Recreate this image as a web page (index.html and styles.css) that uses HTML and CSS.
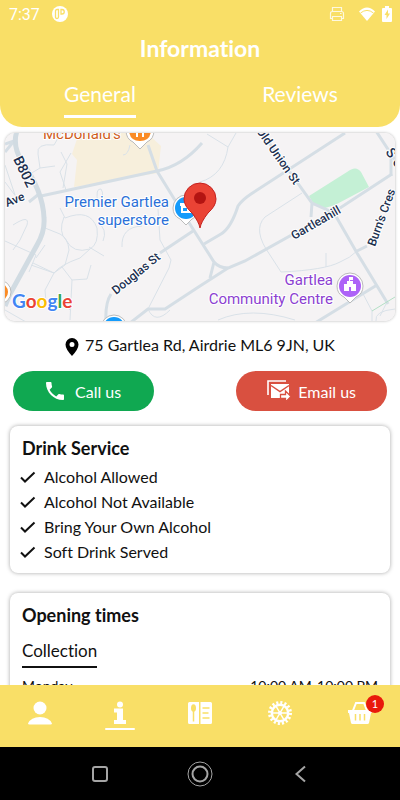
FILE: index.html
```html
<!DOCTYPE html>
<html lang="en">
<head>
    <meta charset="UTF-8">
    <meta name="viewport" content="width=device-width, initial-scale=1.0">
    <title>Information</title>
    <link rel="stylesheet" href="styles.css">
</head>
<body>

    <header class="top">
        <!-- Status bar -->
        <div class="status">
            <span>7:37</span>
            <svg width="16" height="16" viewBox="0 0 16 16">
                <circle cx="8" cy="8" r="8" fill="#fff"/>
                <path d="M3.500 5q0-1.500 1.500-1.500h1.500v7.500q0 1.500-1.500 1.500t-1.500-1.500zM9 3.500h1a2 2 0 0 1 0 4.500h-1z" fill="none" stroke="#f9df67" stroke-width="1.300"/>
            </svg>
            <svg class="printer" width="16" height="16" viewBox="0 0 16 16" fill="none" stroke="#fff" stroke-width="1.200">
                <path d="M3.500 5.500v-4h9v4M3.500 12.500h-2v-5q0-2 2-2h9q2 0 2 2v5h-2M3.500 10.500h9v4h-9zM11 7.500h1.500"/>
            </svg>
            <svg class="wifi" width="18" height="14" viewBox="0 0 18 14">
                <path d="M1 4.500Q9-3.500 17 4.500L9 14z" fill="#fff"/>
                <path d="M2.500 6Q9 .800 15.500 6" fill="none" stroke="#f9df67" stroke-width="1"/>
            </svg>
            <svg width="10" height="16" viewBox="0 0 10 16">
                <path d="M3 0h4v2h2q1 0 1 1v12q0 1-1 1h-8q-1 0-1-1v-12q0-1 1-1h2z" fill="#fff"/>
                <path d="M6 3.500L2.500 9h2v4L8 7.500H6z" fill="#f9df67"/>
            </svg>
        </div>
        <h1>Information</h1>
        <nav class="tabs">
            <a href="#general" class="active">General</a>
            <a href="#reviews">Reviews</a>
        </nav>
    </header>

    <main id="general">
        <!-- Map -->
        <svg class="map" viewBox="5 133 390 188" preserveAspectRatio="xMidYMid slice" role="img" aria-label="Map of Gartlea">
            <rect x="5" y="133" width="390" height="188" fill="#f5f3f4"/>
            <path d="M79 133H147L161 146L158 173L74 187L77 160L72 154z" fill="#f7efdc"/>
            <path d="M309 196L347 172Q356 165 361 172L369 187L335 205L325 208L313 203z" fill="#c4f0d5"/>

            <g class="lane">
                <path d="M61 133L54 145Q36 143 38 154L40 168L55 166M40 168L30 174M61 152L67 164L63 188M71 153L60 172L66 190"/>
                <path d="M5 165L15 195M5 182L20 202M13 225Q30 214 27 225L20 240L13 250M5 241L36 255L29 272"/>
                <path d="M45 228L60 234Q68 238 69 250L65 265L54 273L33 263M45 245L36 258M31 265L54 273M60 208L65 218Q90 208 97 228Q99 244 90 249Q73 254 66 240Q58 232 64 217"/>
                <path d="M89 247L104 256M90 249L80 258Q60 265 54 273L45 290L46 302M62 267L72 280L70 320M72 280L87 279L91 265M97 222Q108 229 103 241M46 302Q62 300 70 310"/>
                <path d="M98 203Q95 188 101 189Q105 195 99 202M158 209L160 240L171 260L169 268L148 309M122 247Q121 227 142 226M148 309Q155 325 170 310M130 145Q128 155 123 155"/>
                <path d="M207 134L228 147Q224 175 200 182M228 147L236 133M302 193L265 217Q252 230 270 255L281 272Q325 270 340 262Q350 258 357 251M326 253V267"/>
                <path d="M5 310L40 330M218 320Q250 306 295 320M361 290L372 311V321M387 302L380 316M395 309Q374 311 376 321"/>
            </g>
            <g class="road">
                <path d="M5 144L17 140M41 196L157 171Q182 166 202 143M29 202L39 194M148 145L157 171L173 197L193 229L214 262Q219 268 228 268M214 262L210 278"/>
                <path d="M160 253L193 231M111 294Q105 303 106 322M130 323L148 309H165L200 286L228 268L245 261L340 208L392 174"/>
                <path d="M204 244L221 234Q231 228 238 206Q242 200 251 194L345 133M262 133L312 203L334 213L357 253L388 304M312 203L311 217M357 251L367 246"/>
                <path d="M315 323L377 285M376 131L395 160M391 176V155M5 152L14 141"/>
            </g>
            <path class="highway" d="M17 131Q12 145 22 162Q43 191 44 218Q45 232 37 245L10 294L5 306"/>
            <path d="M372 311L395 297" stroke="#b3dfc5" fill="none"/>

            <!-- Place markers -->
            <g class="marker">
                <path d="M126 130Q126 139 133 142L140 149L147 142Q154 139 154 130z"/>
                <path d="M173 208A13 13 0 0 1 199 208Q199 216 192 219L186 225L180 219Q173 216 173 208z"/>
                <path d="M337 286A13 13 0 0 1 363 286Q363 294 356 297L350 303L344 297Q337 294 337 286z"/>
                <circle cx="114" cy="328" r="13"/>
                <circle cx="-1" cy="292" r="12"/>
            </g>
            <path d="M129 131H151Q150 141 140 141Q130 141 129 131z" fill="#fa8b25"/>
            <path d="M137 131v6M143 131v6" stroke="#fff" stroke-width="2"/>
            <circle cx="186" cy="208" r="11" fill="#159bfb"/>
            <path d="M180 203h12v3h-12zM181 206h10v7h-10z" fill="#fff"/>
            <path d="M183 208h4v3h-4z" fill="#159bfb"/>
            <circle cx="350" cy="286" r="11" fill="#ad63f7"/>
            <path d="M344 291v-7h3v-3h2v-4h4v3h-3v1h3v3h3v7h-5v-4h-2v4z" fill="#fff"/>
            <circle cx="114" cy="328" r="11" fill="#159bfb"/>
            <circle cx="-1" cy="292" r="9" fill="#fa8b25"/>

            <!-- Labels -->
            <g class="street">
                <text transform="translate(13 159) rotate(64)" font-size="14">B802</text>
                <text transform="translate(7 207) rotate(-22)">Ave</text>
                <text transform="translate(116 295) rotate(-39)">Douglas St</text>
                <text transform="translate(256 131) rotate(55)">Old Union St</text>
                <text transform="translate(294 240) rotate(-30)">Gartleahill</text>
                <text transform="translate(375 247) rotate(-70)">Burn's Cres</text>
                <text transform="translate(385 152) rotate(55)" font-size="14">S C</text>
            </g>
            <g class="place">
                <text x="43" y="139" fill="#cf5d1c">McDonald's</text>
                <g fill="#2a70d8" text-anchor="end">
                    <text x="169" y="207">Premier Gartlea</text>
                    <text x="169" y="225">superstore</text>
                </g>
                <g fill="#8c3fd1" text-anchor="end">
                    <text x="333" y="285">Gartlea</text>
                    <text x="333" y="304">Community Centre</text>
                </g>
            </g>
            <text class="google" x="12" y="308"><tspan fill="#4285f4">G</tspan><tspan fill="#ea4335">o</tspan><tspan fill="#fbbc05">o</tspan><tspan fill="#4285f4">g</tspan><tspan fill="#34a853">l</tspan><tspan fill="#ea4335">e</tspan></text>

            <!-- Pin -->
            <path d="M200 228Q199 222 192 213Q184 206 184 199A16 16 0 0 1 216 199Q216 206 208 213Q201 222 200 228z" fill="#ea4335" stroke="#c5221f"/>
            <circle cx="200" cy="198" r="6" fill="#b31412"/>
        </svg>

        <p class="address">
            <svg width="14" height="18" viewBox="0 0 14 18"><path fill-rule="evenodd" d="M7 0a6.500 6.500 0 0 1 6.500 6.500Q13.500 11 7 18Q.500 11 .500 6.500A6.500 6.500 0 0 1 7 0zM7 4a2.500 2.500 0 1 0 0 5a2.500 2.500 0 1 0 0-5z"/></svg>
            75 Gartlea Rd, Airdrie ML6 9JN, UK
        </p>

        <div class="actions">
            <button type="button" class="call">
                <svg width="18" height="18" viewBox="3 3 18 18" fill="#fff"><path d="M6.620 10.790c1.440 2.830 3.760 5.140 6.590 6.590l2.200-2.200c.27-.27.67-.36 1.020-.24 1.120.37 2.330.57 3.570.57.55 0 1 .45 1 1V20c0 .55-.45 1-1 1-9.390 0-17-7.610-17-17 0-.55.45-1 1-1h3.500c.55 0 1 .45 1 1 0 1.250.2 2.450.57 3.570.11.35.03.74-.25 1.020l-2.200 2.200z"/></svg>
                Call us
            </button>
            <button type="button" class="email">
                <svg width="24" height="22" viewBox="0 0 24 22">
                    <path d="M1 15V1h18" fill="none" stroke="#fff" stroke-width="1.600"/>
                    <path d="M4 4h18v14H4z" fill="#fff"/>
                    <path d="M4 5.500l9 6l9-6" fill="none" stroke="#d95040" stroke-width="1.500"/>
                    <path d="M13.500 14.500h5v-3.500l5.500 5.500l-5.500 5.500v-3.500h-5z" fill="#fff" stroke="#d95040" stroke-width="1.300"/>
                </svg>
                Email us
            </button>
        </div>

        <section class="card">
            <h2>Drink Service</h2>
            <ul>
                <li><svg width="16" height="12" viewBox="0 0 16 12"><path d="M1 6.500L5 10.500L14.500 1.500"/></svg>Alcohol Allowed</li>
                <li><svg width="16" height="12" viewBox="0 0 16 12"><path d="M1 6.500L5 10.500L14.500 1.500"/></svg>Alcohol Not Available</li>
                <li><svg width="16" height="12" viewBox="0 0 16 12"><path d="M1 6.500L5 10.500L14.500 1.500"/></svg>Bring Your Own Alcohol</li>
                <li><svg width="16" height="12" viewBox="0 0 16 12"><path d="M1 6.500L5 10.500L14.500 1.500"/></svg>Soft Drink Served</li>
            </ul>
        </section>

        <section class="card">
            <h2>Opening times</h2>
            <h3>Collection</h3>
            <table>
                <tr><th scope="row">Monday</th><td>10:00 AM-10:00 PM</td></tr>
            </table>
        </section>
    </main>

    <!-- App navigation -->
    <nav class="bottom">
        <a href="#account" aria-label="Account">
            <svg width="24" height="24" viewBox="0 0 24 24" fill="#fff"><circle cx="12" cy="7" r="6.500"/><path d="M0 22.500Q3 16 12 16T24 22.500Q24 23.500 22.500 23.500H1.500Q0 23.500 0 22.500z"/></svg>
        </a>
        <a href="#general" class="active" aria-label="Information">
            <svg width="24" height="24" viewBox="0 0 24 24" fill="#fff"><circle cx="12" cy="3.500" r="3"/><path d="M6 7.500h9v11.500h3v4H6v-4h3v-7.500H6z"/></svg>
        </a>
        <a href="#menu" aria-label="Menu">
            <svg width="24" height="24" viewBox="0 0 24 24">
                <path d="M1.500 1H11v22H1.500Q0 23 0 21.500v-19Q0 1 1.500 1zM12.500 1h10Q24 1 24 2.500v19q0 1.500-1.500 1.500H12.500z" fill="#fff"/>
                <ellipse cx="5.500" cy="7" rx="2.500" ry="3.800" fill="#f9df67"/>
                <path d="M5.500 10v10.500M14.500 7h7M14.500 12h6M14.500 17h7" stroke="#f9df67" stroke-width="1.500"/>
            </svg>
        </a>
        <a href="#settings" aria-label="Settings">
            <svg width="24" height="24" viewBox="0 0 24 24" fill="none" stroke="#fff">
                <circle cx="12" cy="12" r="10.500" stroke-width="3" stroke-dasharray="2.100 2.023"/>
                <circle cx="12" cy="12" r="8.200" stroke-width="2.400"/>
                <path d="M4 12h16M8 5.100l8 13.800M16 5.100L8 18.900" stroke-width="1.400"/>
                <circle cx="12" cy="12" r="1.500" fill="#fff"/>
            </svg>
        </a>
        <a href="#basket" aria-label="Basket, 1 item">
            <span class="basket">
                <svg width="24" height="24" viewBox="0 0 24 24">
                    <path d="M5 9.500L8 2h8l3 7.500" fill="none" stroke="#fff" stroke-width="2"/>
                    <path d="M0 9h24v3h-1L21 22q-.300 1-1.500 1h-15q-1.200 0-1.500-1L1 12H0z" fill="#fff"/>
                    <path d="M7.500 13v6.500M12 13v6.500M16.500 13v6.500" stroke="#f9df67" stroke-width="1.500"/>
                </svg>
                <span class="badge">1</span>
            </span>
        </a>
    </nav>

    <!-- System navigation -->
    <div class="system">
        <button type="button" aria-label="Recent apps"><svg width="26" height="26" viewBox="0 0 26 26"><rect x="6" y="6" width="14" height="14" rx="2" stroke-width="2"/></svg></button>
        <button type="button" aria-label="Home"><svg width="26" height="26" viewBox="0 0 26 26"><circle cx="13" cy="13" r="12"/><circle cx="13" cy="13" r="7.500" stroke-width="2"/></svg></button>
        <button type="button" aria-label="Back"><svg width="26" height="26" viewBox="0 0 26 26"><path d="M18 5.500L9.500 13L18 20.500" stroke-width="2"/></svg></button>
    </div>

</body>
</html>
```

FILE: styles.css
```css
* {
    box-sizing: border-box;
}
body {
    margin: 0;
    height: 100vh;
    display: flex;
    flex-direction: column;
    font-family: Lato, sans-serif;
    font-size: 16px;
    font-variant-ligatures: none;
    color: #111;
    background-color: #fff;
}
h1, h2, h3, p, ul {
    margin: 0;
    padding: 0;
}
a {
    color: inherit;
    text-decoration: none;
}
svg {
    display: block;
    flex-shrink: 0;
}

/* Header */
.top {
    background-color: #f9df67;
    color: #fff;
    border-radius: 0 0 22px 22px;
    flex-shrink: 0;
}
.status {
    display: flex;
    align-items: center;
    height: 28px;
    padding: 0 8px 0 9px;
    font-family: Roboto, sans-serif;
    font-size: 16px;
}
.status span {
    margin-right: 12px;
}
.printer {
    margin-left: auto;
    opacity: 0.8;
}
.wifi {
    margin: 0 6px 0 13px;
}
h1 {
    font-size: 23px;
    line-height: 28px;
    margin-top: 6px;
    text-align: center;
}
.tabs {
    display: grid;
    grid-template-columns: 1fr 1fr;
    padding: 18px 0 9px;
}
.tabs a {
    margin: 0 auto;
    padding-bottom: 7px;
    font-size: 21px;
    line-height: 28px;
    border-bottom: 3px solid transparent;
}
.tabs .active {
    border-color: #fff;
}

/* Page content */
main {
    flex: 1;
    min-height: 0;
    overflow: hidden;
    padding-top: 6px;
}
.map {
    width: calc(100% - 10px);
    margin: 0 5px;
    border-radius: 10px;
    box-shadow: 0 0 3px rgba(0, 0, 0, 0.3);
}
.lane {
    fill: none;
    stroke: #d9e1e8;
    stroke-width: 1;
}
.road {
    fill: none;
    stroke: #d5dee5;
    stroke-width: 3;
}
.highway {
    fill: none;
    stroke: #d1dbe2;
    stroke-width: 5;
}
.marker {
    fill: #fff;
    stroke: #bbb;
    stroke-width: 1;
}
.street, .place {
    font-family: Roboto, sans-serif;
    stroke: #fff;
    stroke-width: 2;
    paint-order: stroke;
}
.street {
    font-size: 12px;
    font-weight: 500;
    fill: #1c3050;
}
.place {
    font-size: 15px;
}
.google {
    font-family: Lato, sans-serif;
    font-size: 19px;
    font-weight: bold;
    stroke: #fff;
    stroke-width: 2;
    paint-order: stroke;
}
.address {
    display: flex;
    justify-content: center;
    gap: 6px;
    margin: 13px 0 15px;
    line-height: 22px;
}
.address svg {
    margin-top: 4px;
}
.actions {
    display: flex;
    justify-content: space-between;
    padding: 0 13px;
}
.actions button {
    display: flex;
    align-items: center;
    height: 40px;
    border: none;
    border-radius: 20px;
    color: #fff;
    font-family: inherit;
    font-size: 16px;
    cursor: pointer;
}
.actions .call {
    gap: 11px;
    padding: 0 33px;
    background-color: #10a851;
}
.actions .email {
    gap: 7px;
    padding: 0 31px;
    background-color: #d95040;
}

/* Cards */
.card {
    margin: 15px 10px 20px;
    padding: 9px 12px;
    border-radius: 8px;
    background-color: #fff;
    box-shadow: 0 0 4px rgba(0, 0, 0, 0.35);
}
.card h2 {
    font-size: 18px;
    line-height: 26px;
    margin-bottom: 3px;
}
.card ul {
    list-style: none;
}
.card li {
    display: flex;
    align-items: center;
    gap: 8px;
    margin-left: -2px;
    line-height: 25px;
}
.card li svg {
    fill: none;
    stroke: #111;
    stroke-width: 2;
}
.card h3 {
    width: fit-content;
    padding-top: 5px;
    border-bottom: 2px solid #111;
    font-size: 17px;
    font-weight: normal;
    line-height: 30px;
}
table {
    width: 100%;
    margin-top: 8px;
    border-collapse: collapse;
    font-size: 14px;
    line-height: 20px;
}
th, td {
    padding: 0;
    font-weight: normal;
    text-align: left;
}
td {
    text-align: right;
}

/* Bottom bars */
.bottom {
    display: grid;
    grid-template-columns: repeat(5, 1fr);
    height: 62px;
    flex-shrink: 0;
    background-color: #f9df67;
    padding-top: 16px;
}
.bottom a {
    display: flex;
    flex-direction: column;
    align-items: center;
    gap: 3px;
}
.bottom .active::after {
    content: "";
    width: 30px;
    height: 2px;
    border-radius: 1px;
    background-color: #fff;
}
.basket {
    position: relative;
}
.badge {
    position: absolute;
    top: -6px;
    right: -12px;
    width: 18px;
    height: 18px;
    border-radius: 50%;
    background-color: #e9190b;
    color: #fff;
    font-size: 11px;
    line-height: 18px;
    text-align: center;
}
.system {
    display: flex;
    justify-content: space-around;
    align-items: center;
    height: 53px;
    flex-shrink: 0;
    padding: 0 50px;
    background-color: #000;
}
.system button {
    padding: 0;
    border: none;
    background: none;
}
.system svg {
    fill: none;
    stroke: #a5a5a5;
}
```
